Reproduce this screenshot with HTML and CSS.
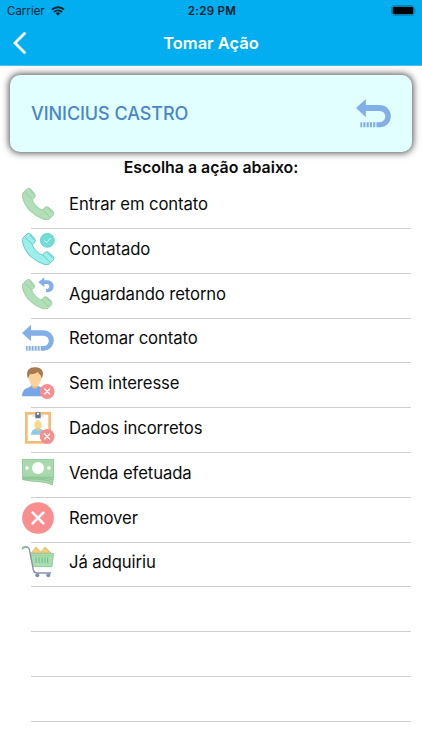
FILE: index.html
```
<!DOCTYPE html>
<html lang="pt-BR">
<head>
  <meta charset="UTF-8">
  <meta name="viewport" content="width=device-width, initial-scale=1">
  <title>Tomar Ação</title>
  <link rel="stylesheet" href="styles.css">
</head>
<body>

  <svg class="symbols" width="0" height="0">
    <symbol id="phone" viewBox="0 0 96 96">
      <path d="M3 15 L15 3 Q20 -1 26 3 L38 18 Q42 23 38 28 L31 34 Q31 41 41 52 Q53 65 62 66 L69 58 Q74 54 80 58 L94 71 Q98 76 94 81 L82 93 Q76 98 66 94 Q43 87 21 66 Q4 46 1 25 Q0 19 3 15Z"/>
      <path d="M8 12 L31 34 M63 66 L84 88 M24 6 L37 21 M77 60 L92 74" fill="none"/>
    </symbol>
    <symbol id="back" viewBox="0 0 96 96">
      <path d="M0 33 L27 8 V25 H65 A30.500 30.500 0 0 1 65 86 V72 A15.500 15.500 0 0 0 65 41 H27 V58Z"/>
      <path d="M12 72 h5 v14 h-5z M20 72 h6 v14 h-6z M29 72 h6 v14 h-6z M38 72 h6 v14 h-6z M47 72 h6 v14 h-6z M56 72 h10 v14 h-10z"/>
    </symbol>
    <symbol id="cancel" viewBox="0 0 96 96">
      <circle cx="48" cy="48" r="47.500" fill="#f98e8e"/>
      <path d="M32 32 L64 64 M64 32 L32 64" stroke="#fff" stroke-width="8" stroke-linecap="round"/>
    </symbol>
  </svg>

  <header class="header">
    <div class="status">
      <div class="carrier">
        <span>Carrier</span>
        <svg class="wifi" viewBox="0 0 42 30">
          <path d="M3 11 A26 26 0 0 1 39 11 M9 18 A17 17 0 0 1 33 18" fill="none" stroke="#07222e" stroke-width="5.500"/>
          <path d="M21 29 L14 22 Q21 16 28 22Z" fill="#07222e"/>
        </svg>
      </div>
      <span class="time">2:29 PM</span>
      <svg class="battery" viewBox="0 0 78 33">
        <rect x="1.500" y="1.500" width="69" height="30" rx="7" fill="none" stroke="#087eab" stroke-width="2.500"/>
        <rect x="5" y="5" width="62" height="23" rx="4" fill="#000"/>
        <path d="M73.500 11 Q78 16 73.500 22Z" fill="#087eab"/>
      </svg>
    </div>
    <nav class="nav">
      <svg class="nav-back" viewBox="0 0 13 22">
        <path d="M11.500 1.500 L2 11 L11.500 20.500" fill="none" stroke="#fff" stroke-width="2.800" stroke-linecap="round"/>
      </svg>
      <h1>Tomar Ação</h1>
    </nav>
  </header>

  <main>
    <section class="card">
      <span class="name">VINICIUS CASTRO</span>
      <svg class="card-icon blue"><use href="#back"/></svg>
    </section>

    <h2>Escolha a ação abaixo:</h2>

    <ul class="actions">
      <li>
        <svg class="icon green"><use href="#phone"/></svg>
        <span>Entrar em contato</span>
      </li>
      <li>
        <svg class="icon" viewBox="0 0 96 96">
          <use href="#phone" class="teal"/>
          <circle cx="76" cy="22" r="21" fill="#72dcd7" stroke="#59c5c5" stroke-width="2"/>
          <path d="M67 23 L74 29 L86 15" fill="none" stroke="#e6ffff" stroke-width="3"/>
        </svg>
        <span>Contatado</span>
      </li>
      <li>
        <svg class="icon" viewBox="0 0 96 96">
          <use href="#phone" class="green" y="3" width="91" height="91"/>
          <path class="blue" d="M49 13 L67 -2 V7 H77 A18 18 0 0 1 77 43 H72 V33 H77 A8 8 0 0 0 77 18 H67 V27Z"/>
        </svg>
        <span>Aguardando retorno</span>
      </li>
      <li>
        <svg class="icon blue"><use href="#back"/></svg>
        <span>Retomar contato</span>
      </li>
      <li>
        <svg class="icon" viewBox="0 0 96 96">
          <path d="M0 88 Q1 64 22 61 L29 55 H47 L55 61 Q76 65 78 88Z" fill="#76a5e8"/>
          <path d="M29 48 H48 V60 Q38 71 29 60Z" fill="#efb982"/>
          <path d="M20 20 Q22 8 39 8 Q56 8 58 22 V34 Q54 58 39 60 Q24 57 20 34Z" fill="#fbd29a"/>
          <path d="M18 35 Q12 17 19 8 Q26 0 41 1 Q56 1 61 12 Q66 20 59 35 L56 25 Q52 23 48 15 Q37 23 23 22Z" fill="#a97950"/>
          <use href="#cancel" x="53" y="51" width="45" height="45"/>
        </svg>
        <span>Sem interesse</span>
      </li>
      <li>
        <svg class="icon" viewBox="0 0 96 96">
          <rect x="13" y="4" width="70" height="87" fill="#fff" stroke="#f4bb75" stroke-width="8"/>
          <path d="M31 8 H65 V15 H31Z" fill="#dfe5ea"/>
          <path d="M40 6 Q40 -1 48 -1 Q56 -1 56 6 V19 H40Z" fill="#61788c"/>
          <circle cx="48" cy="5" r="3.500" fill="#fff"/>
          <path d="M27 68 Q28 53 41 50 H55 Q68 54 69 68Z" fill="#8bcbe9"/>
          <ellipse cx="48" cy="39" rx="11" ry="14" fill="#f9d889"/>
          <path d="M42 49 H54 V54 Q48 59 42 54Z" fill="#f1c477"/>
          <use href="#cancel" x="53" y="51" width="45" height="45"/>
        </svg>
        <span>Dados incorretos</span>
      </li>
      <li>
        <svg class="icon" viewBox="0 0 96 96">
          <path d="M2 60 H95 L91 84 Q74 75 51 74 Q29 74 2 68Z" fill="#a8d8ae" stroke="#80bd8c" stroke-width="2"/>
          <path d="M3 67 Q68 63 92 76 M3 64 Q70 62 94 68" fill="none" stroke="#7dbb89" stroke-width="2"/>
          <rect x="1" y="7" width="94" height="53" fill="#a9dbae" stroke="#83bf8d" stroke-width="2"/>
          <path d="M7 14 H89 V53 H7Z" fill="none" stroke="#98cda0"/>
          <circle cx="48" cy="33" r="18" fill="#fff"/>
          <circle cx="15" cy="33" r="5.500" fill="#fff"/>
          <circle cx="81" cy="33" r="5.500" fill="#fff"/>
        </svg>
        <span>Venda efetuada</span>
      </li>
      <li>
        <svg class="icon"><use href="#cancel"/></svg>
        <span>Remover</span>
      </li>
      <li>
        <svg class="icon" viewBox="0 0 96 96">
          <path d="M27 22 L42 3 L57 19 L69 3 L88 22Z" fill="#f8cb76" stroke="#dda953" stroke-width="2"/>
          <path d="M25 22 H95 L90 62 H34Z" fill="#a9dfb0" stroke="#7dbc8b" stroke-width="2"/>
          <path d="M27 29 H93" stroke="#8cc998" stroke-width="2"/>
          <path d="M42 34 V51 M51 34 V51 M60 34 V51 M69 34 V51 M77 34 V51" stroke="#77b587" stroke-width="3"/>
          <path d="M11 4 Q19 0 22 11 L34 72 Q36 81 45 81 H87" fill="none" stroke="#8792a6" stroke-width="4"/>
          <path d="M2 7 Q5 2 12 3" fill="none" stroke="#80b99b" stroke-width="6" stroke-linecap="round"/>
          <circle cx="46" cy="88" r="6" fill="#8290a5"/>
          <circle cx="79" cy="88" r="6" fill="#8290a5"/>
        </svg>
        <span>Já adquiriu</span>
      </li>
      <li></li>
      <li></li>
      <li></li>
    </ul>
  </main>

</body>
</html>
```
FILE: styles.css
```
* {
  box-sizing: border-box;
}

body {
  margin: 0;
  height: 750px;
  overflow: hidden;
  background-color: #fff;
  color: #0b0b0b;
  font-family: Inter, "Liberation Sans", sans-serif;
}

.symbols {
  display: none;
}

.header {
  height: 66px;
  background-color: #02aeef;
  border-bottom: 1px solid #4fbdec;
}

.status {
  display: grid;
  grid-template-columns: 1fr auto 1fr;
  align-items: center;
  height: 21px;
  padding: 0 5px 0 7px;
  color: #07222e;
  font-size: 11.5px;
}

.carrier {
  display: flex;
  align-items: center;
  gap: 6px;
}

.wifi {
  width: 14px;
  height: 10px;
}

.time {
  font-weight: 600;
  letter-spacing: 0.3px;
}

.battery {
  justify-self: end;
  width: 26px;
  height: 11px;
}

.nav {
  display: grid;
  grid-template-columns: 30px 1fr 30px;
  align-items: center;
  height: 44px;
  padding: 0 13px;
}

.nav-back {
  width: 13px;
  height: 22px;
}

h1 {
  margin: 0;
  color: #fff;
  font-size: 16.5px;
  font-weight: 600;
  text-align: center;
}

.card {
  display: flex;
  align-items: center;
  justify-content: space-between;
  height: 77px;
  margin: 9px 10px 0;
  padding: 0 21px;
  border-radius: 10px;
  background-color: #e1ffff;
  box-shadow: 0 0 7px 1px rgba(0, 0, 0, 0.7);
}

.name {
  color: #4a86c5;
  font-size: 18px;
  font-weight: 500;
  letter-spacing: -0.07px;
}

.card-icon {
  width: 35px;
  height: 35px;
}

h2 {
  margin: 5px 0 0;
  height: 27.300px;
  font-size: 15.9px;
  font-weight: 600;
  line-height: 22px;
  text-align: center;
}

.actions {
  margin: 0;
  padding: 0 11px 0 31px;
  list-style: none;
}

.actions li {
  display: flex;
  align-items: center;
  gap: 15px;
  height: 44.800px;
  padding-bottom: 4.500px;
  border-bottom: 1px solid #cfcfd1;
  font-size: 16.7px;
  letter-spacing: -0.1px;
  white-space: nowrap;
}

.icon {
  flex: none;
  width: 32px;
  height: 32px;
  margin-left: -9px;
  overflow: visible;
}

.blue {
  fill: #83afe9;
}

.green {
  fill: #b1dfb8;
  stroke: #92c69b;
  stroke-width: 2.5;
}

.teal {
  fill: #9eeeeb;
  stroke: #65cbc9;
  stroke-width: 3;
}
```
